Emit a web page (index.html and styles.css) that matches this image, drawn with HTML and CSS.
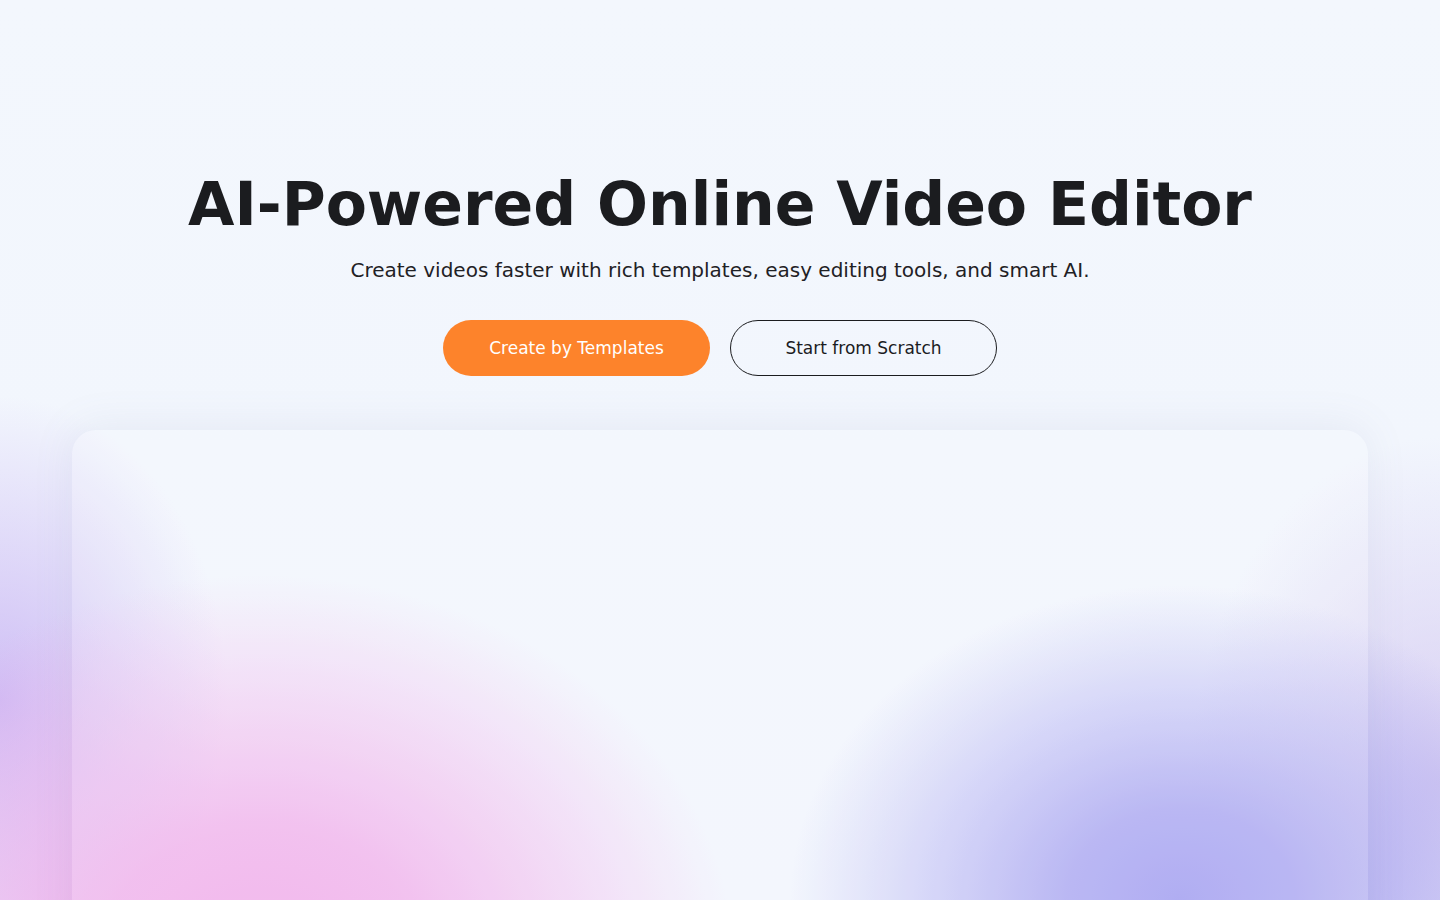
FILE: index.html
```html
<!DOCTYPE html>
<html lang="en">
<head>
<meta charset="utf-8">
<title>AI-Powered Online Video Editor</title>
<link rel="stylesheet" href="styles.css">
</head>
<body>
<main class="page">
  <section class="hero">
    <h1 class="hero-title">AI-Powered Online Video Editor</h1>
    <p class="hero-sub">Create videos faster with rich templates, easy editing tools, and smart AI.</p>
    <div class="hero-actions">
      <a class="btn btn-primary" href="#">Create by Templates</a>
      <a class="btn btn-outline" href="#">Start from Scratch</a>
    </div>
  </section>
  <section class="preview">
    <div class="preview-card"></div>
  </section>
</main>
</body>
</html>
```
FILE: styles.css
```css
* { box-sizing: border-box; }
html, body { margin: 0; padding: 0; height: 100%; }
body {
  font-family: "DejaVu Sans", "Noto Sans", sans-serif;
  color: #1b1c1f;
  background: #f2f6fd;
  overflow: hidden;
}
.page {
  height: 900px;
  overflow: hidden;
  background:
    radial-gradient(ellipse 640px 520px at 260px 960px, rgba(240,172,234,1) 0%, rgba(240,172,234,0.85) 25%, rgba(240,172,234,0) 74%),
    radial-gradient(ellipse 300px 400px at 0px 700px, rgba(204,186,244,0.95), rgba(204,186,244,0) 76%),
    radial-gradient(ellipse 520px 420px at 1180px 900px, rgba(164,160,240,1) 0%, rgba(164,160,240,0.85) 22%, rgba(164,160,240,0) 75%),
    radial-gradient(ellipse 320px 440px at 1440px 780px, rgba(214,204,242,0.95), rgba(214,204,242,0) 78%),
    linear-gradient(180deg, #f3f7fd 0%, #f1f5fd 100%);
}
.hero {
  display: flex;
  flex-direction: column;
  align-items: center;
  padding-top: 164px;
}
.hero-title {
  margin: 0;
  font-size: 60px;
  line-height: 80px;
  font-weight: 700;
  color: #1b1c1f;
}
.hero-sub {
  margin: 12px 0 0;
  font-size: 20px;
  line-height: 28px;
  color: #1f2125;
}
.hero-actions {
  display: flex;
  gap: 20px;
  margin-top: 36px;
}
.btn {
  display: flex;
  align-items: center;
  justify-content: center;
  width: 267px;
  height: 56px;
  border-radius: 28px;
  font-size: 17px;
  text-decoration: none;
}
.btn-primary {
  background: #fd832b;
  color: #fff;
}
.btn-outline {
  border: 1px solid #1b1c1f;
  color: #1b1c1f;
  background: transparent;
}
.preview {
  padding: 54px 72px 0;
}
.preview-card {
  height: 520px;
  border-radius: 24px;
  background: rgba(255,255,255,0.14);
  box-shadow: 0 -4px 40px rgba(120,130,170,0.10);
}
```
